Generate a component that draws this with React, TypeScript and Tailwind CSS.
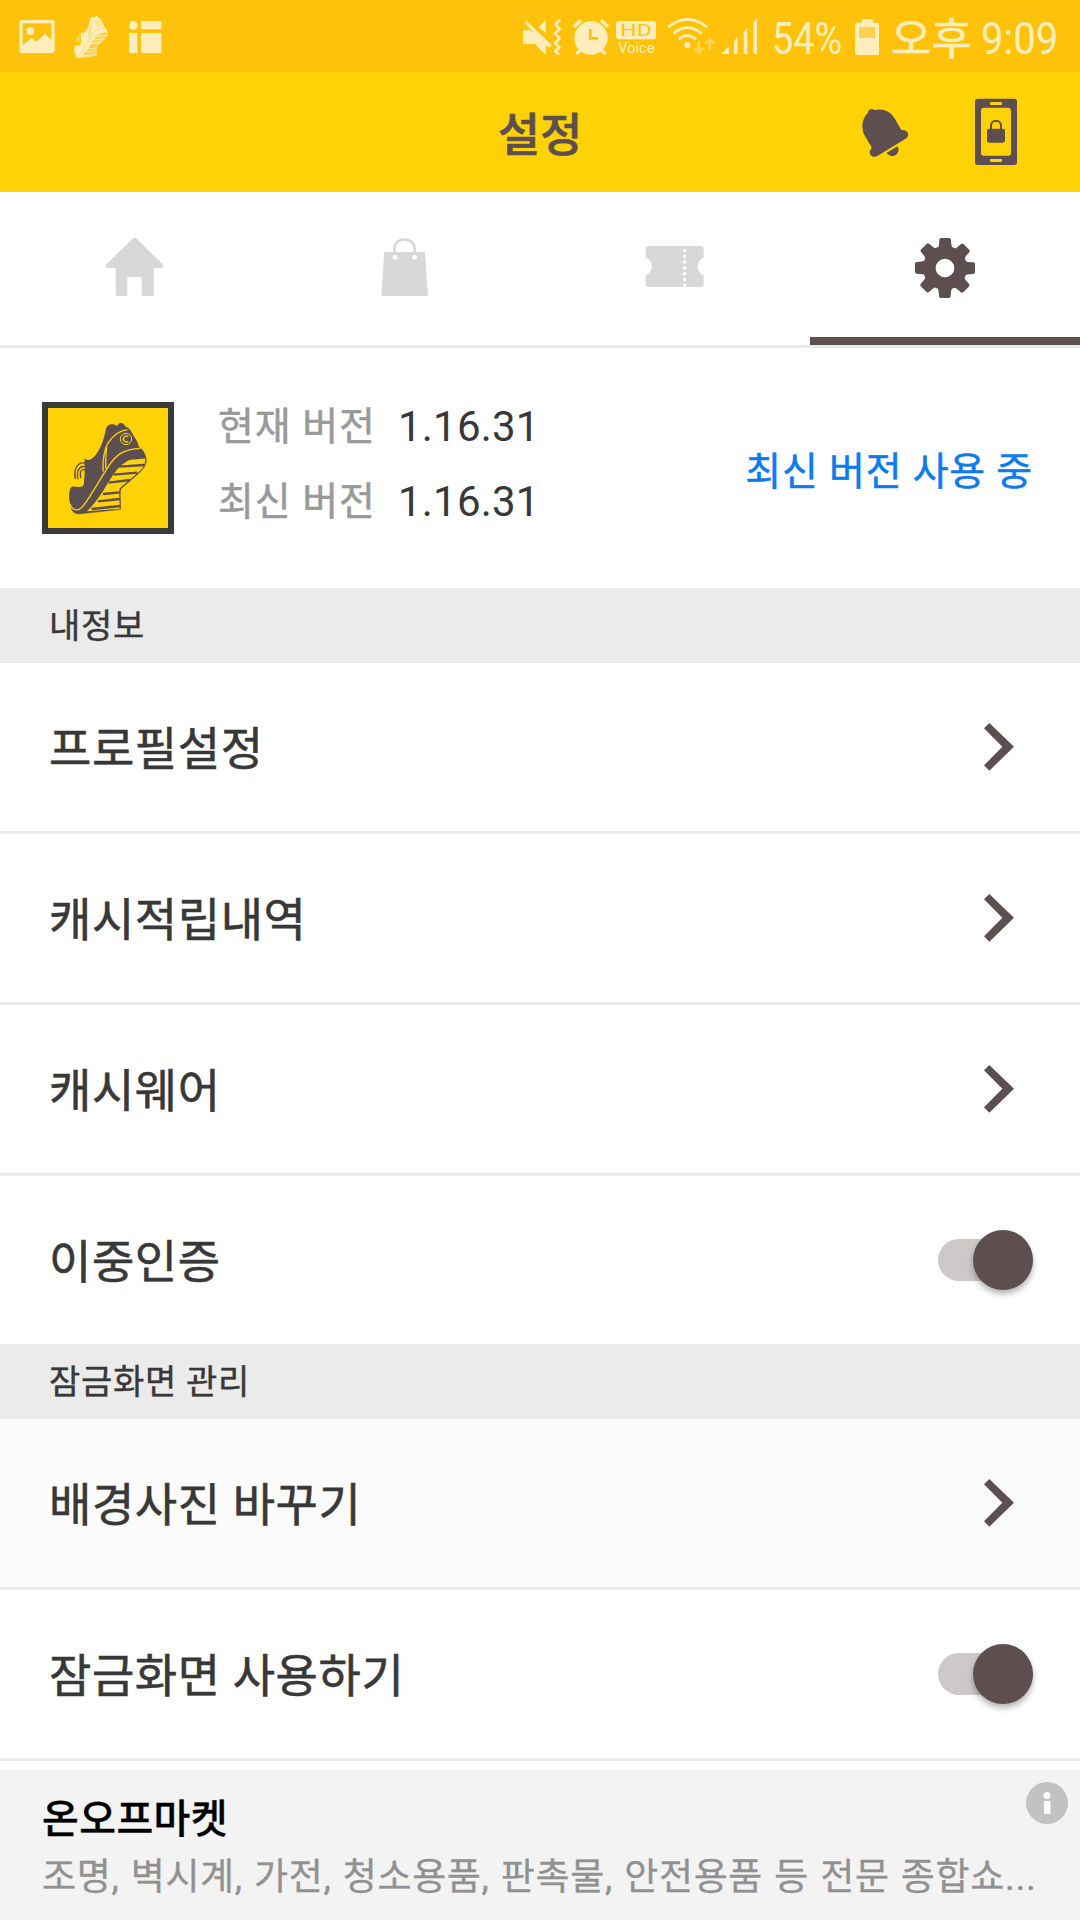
import type { ReactNode } from "react";

const FONT = "font-['Roboto','Noto_Sans_CJK_KR',sans-serif]";

function ShoeShape({ color, gap }: { color: string; gap: string }) {
  return (
    <g>
      <path
        fill={color}
        d="M257 152C258 137 269 131 279 133C285 134 288 138 292 137C296 129 302 126 308 130C313 134 314 139 321 142C328 146 334 153 338 162C346 177 354 184 357 202C371 209 379 225 379 242C378 258 367 270 353 283L302 327C299 341 302 360 301 388L173 402C160 401 152 391 151 374C146 356 145 330 155 320C168 319 178 324 188 319C194 312 191 304 193 294C196 276 192 255 194 235C199 241 208 242 217 235C232 222 246 201 257 152Z"
      />
      <path fill={gap} d="M304 256C324 239 349 227 376 236C377 257 364 271 349 282L299 325C296 345 300 361 299 386L200 394C228 369 245 340 262 312C275 291 287 270 304 256Z" />
      <path
        stroke={color}
        strokeWidth="7"
        fill="none"
        d="M318 237L372 232M298 260L373 255M281 284L352 278M266 308L330 300M249 342L299 337M234 364L300 357M215 387L301 378"
      />
      <path fill="none" stroke={color} strokeWidth="2" d="M378 235C382 255 365 272 350 285L302 327C298 345 303 365 301 388L173 402" />
      <path
        fill="none"
        stroke={gap}
        strokeWidth="4"
        d="M150 372C158 395 177 394 190 377C218 340 238 300 267 257C287 226 310 207 361 205M250 275C247 245 252 209 265 188C279 166 298 153 322 149M258 266C256 247 257 226 260 201"
      />
      <circle cx="318" cy="177" r="17" fill="none" stroke={gap} strokeWidth="3" />
      <path d="M325 170A9 9 0 1 0 325 184" fill="none" stroke={gap} strokeWidth="4" />
      <path fill="none" stroke={color} strokeWidth="4" d="M166 297C160 267 173 245 194 249M174 298C168 274 178 257 194 260M182 294C178 276 184 266 195 270" />
    </g>
  );
}

function StatusIcon({ x, w, className, children }: { x: number; w: number; className?: string; children: ReactNode }) {
  return (
    <svg viewBox={`${x} 0 ${w} 216`} width={w / 3} height="72" fill="#ffeebb" className={`shrink-0 overflow-visible ${className ?? ""}`}>
      {children}
    </svg>
  );
}

function StatusBar() {
  return (
    <div className="flex h-[72px] items-center bg-[#ffc20a] pl-[19px] pr-[24px] text-[45px] leading-[72px] text-[#ffeebb]">
      <StatusIcon x={57} w={108}>
        <path fillRule="evenodd" d="M65 60H157Q164 60 164 67V152Q164 159 157 159H65Q58 159 58 152V67Q58 60 65 60ZM68 70V136L95 113L109 125L135 101L154 119V70Z" />
        <circle cx="91" cy="93" r="12" />
      </StatusIcon>
      <StatusIcon x={222} w={102} className="ml-[19px]">
        <g transform="translate(159.600 -11) scale(.43 .46)">
          <ShoeShape color="#ffeebb" gap="#ffce52" />
        </g>
      </StatusIcon>
      <StatusIcon x={387} w={97} className="ml-[21px]">
        <circle cx="400" cy="76" r="13" />
        <path d="M423 63H484V88H423ZM387 99H412V159H387ZM423 99H484V159H423Z" />
      </StatusIcon>

      <div className="flex-1"></div>

      <StatusIcon x={69} w={114}>
        <path d="M69 91H91L154 132L143 142L137 136V163H134L105 132H74Q69 132 69 126ZM137 59V98L115 82Z" />
        <path d="M77 66L152 139" stroke="#ffeebb" strokeWidth="9" />
        <path d="M181 60L166 73L179 87L165 101L179 115L165 129L179 143L166 153L177 164" fill="none" stroke="#ffeebb" strokeWidth="8" strokeLinejoin="round" />
      </StatusIcon>
      <StatusIcon x={219} w={108} className="ml-[12px]">
        <circle cx="273" cy="114" r="50" />
        <path d="M222 80L243 61M324 80L303 61M243 149L229 162M303 149L317 162" stroke="#ffeebb" strokeWidth="10" />
        <path d="M271 87V115H294" fill="none" stroke="#ffc20a" strokeWidth="8" />
      </StatusIcon>
      <StatusIcon x={348} w={120} className="ml-[7px]">
        <rect x="348" y="63" width="120" height="55" rx="9" />
        <text x="361" y="107" fontSize="47" textLength="94" lengthAdjust="spacingAndGlyphs" fill="#ffc20a">
          HD
        </text>
        <text x="355" y="158" fontSize="45" textLength="108" lengthAdjust="spacingAndGlyphs">
          Voice
        </text>
      </StatusIcon>
      <StatusIcon x={501} w={144} className="ml-[11px]">
        <g fill="none" stroke="#ffeebb" strokeWidth="8">
          <path d="M504 82Q562 34 621 82M520 101Q562 65 605 101M536 118Q562 96 588 118" />
        </g>
        <circle cx="562" cy="135" r="9" />
        <path d="M596 123V157M583 144L596 158L609 144M629 150V117M616 130L629 117L642 130" fill="none" stroke="#ffd553" strokeWidth="8" />
      </StatusIcon>
      <StatusIcon x={663} w={108} className="ml-[6px]">
        <path d="M663 162L687 139V162ZM702 162V122L713 111V162ZM731 162V95L742 84V162ZM760 162V67L771 54V162Z" />
      </StatusIcon>
      <div className="ml-[15px] w-[72px] pt-[5px]">
        <div className="w-max origin-left scale-x-[.84]">54%</div>
      </div>
      <StatusIcon x={225} w={72} className="ml-[11px]">
        <path d="M245 57H278V68H292Q297 68 297 73V160Q297 165 292 165H230Q225 165 225 160V73Q225 68 230 68H245Z" />
        <path d="M237 81H286V114H237Z" fill="#ffd34f" />
      </StatusIcon>
      <div className="ml-[12px] w-[90px] pt-[7px] text-[44px] [-webkit-text-stroke:0.6px]">오후</div>
      <div className="w-[75px] pt-[5px]">
        <div className="w-max origin-left scale-x-[.89]">9:09</div>
      </div>
    </div>
  );
}

function Header() {
  return (
    <div className="grid h-[120px] grid-cols-[1fr_auto_1fr] items-center bg-[#ffd205] text-[#5d4f4f]">
      <div></div>
      <div className="pt-[6px] text-[46px] font-medium leading-[114px] [-webkit-text-stroke:0.7px]">설정</div>
      <div className="flex justify-end gap-[60px] pr-[63px]">
        <svg viewBox="225 216 180 360" width="60" height="120" fill="#5d4f4f">
          <path d="M264 338C265 326 277 324 283 330C309 324 333 334 345 357L361 385C364 392 368 390 374 391C386 395 388 408 379 415L292 468C281 475 268 466 269 455C270 448 277 446 274 440L251 401C243 375 248 354 264 338Z" />
          <path d="M320 458L353 439C360 453 352 466 340 468C332 469 325 465 320 458Z" />
        </svg>
        <svg viewBox="585 216 126 360" width="42" height="120" fill="#5d4f4f">
          <path
            fillRule="evenodd"
            d="M593 296H703Q711 296 711 304V487Q711 495 703 495H593Q585 495 585 487V304Q585 296 593 296ZM611 323Q603 323 603 331V459Q603 467 611 467H685Q693 467 693 459V331Q693 323 685 323ZM632 306Q630 306 630 308V313Q630 315 632 315H664Q666 315 666 313V308Q666 306 664 306ZM632 477Q630 477 630 479V484Q630 486 632 486H664Q666 486 666 484V479Q666 477 664 477Z"
          />
          <rect x="621" y="386" width="54" height="42" rx="7" />
          <path d="M633 390V377C633 357 663 357 663 377V390" fill="none" stroke="#5d4f4f" strokeWidth="6" />
        </svg>
      </div>
    </div>
  );
}

const TEETH = [0, 45, 90, 135, 180, 225, 270, 315];

function Tabs() {
  return (
    <div className="grid h-[156px] grid-cols-4 border-b-[3px] border-[#ebe9e9]">
      <div className="flex justify-center pt-[45px]">
        <svg viewBox="135 141 180 180" width="60" height="60" fill="#d8d8d8">
          <path d="M219 145Q224 141 229 145L308 223Q313 233 305 234H281V314Q281 318 277 318H249Q245 318 245 314V265Q245 261 241 261H206Q202 261 202 265V314Q202 318 198 318H171Q167 318 167 314V234H143Q135 233 139 223Z" />
        </svg>
      </div>
      <div className="flex justify-center pt-[45px]">
        <svg viewBox="945 141 180 180" width="60" height="60" fill="#d8d8d8">
          <path d="M973 186H1095L1104 318H964Z" />
          <path d="M1003 202V178C1003 138 1064 138 1064 178V202" fill="none" stroke="#d8d8d8" strokeWidth="8" />
          <circle cx="1005" cy="202" r="7" fill="#fff" />
          <circle cx="1064" cy="202" r="7" fill="#fff" />
        </svg>
      </div>
      <div className="flex justify-center pt-[45px]">
        <svg viewBox="135 141 180 180" width="60" height="60" fill="#d8d8d8">
          <path d="M146 168H302Q311 168 311 177V202C287 214 287 246 311 256V282Q311 291 302 291H146Q137 291 137 282V256C161 246 161 214 137 202V177Q137 168 146 168Z" />
          <path d="M253.500 177V291" stroke="#fff" strokeWidth="9" strokeDasharray="9 8.400" />
        </svg>
      </div>
      <div className="flex flex-col items-center justify-between pt-[45px]">
        <svg viewBox="945 141 180 180" width="60" height="60" className="overflow-visible" fill="#5d4f4f">
          {TEETH.map((angle) => (
            <path key={angle} transform={`rotate(${angle} 1035 234)`} d="M1013 175Q1017 172 1018 149Q1019 144 1023 144H1048Q1052 144 1053 149Q1054 172 1058 175V190H1013Z" />
          ))}
          <circle cx="1035" cy="234" r="47" fill="none" stroke="#5d4f4f" strokeWidth="38" />
        </svg>
        <div className="h-[8px] w-full bg-[#5d4f4f]"></div>
      </div>
    </div>
  );
}

function VersionInfo() {
  return (
    <div className="flex h-[240px] items-center pl-[42px] pr-[47px]">
      <div className="h-[132px] w-[132px] border-[6px] border-[#393b39] bg-[#ffd205]">
        <svg viewBox="84 84 360 360" width="120" height="120">
          <ShoeShape color="#5d4f4f" gap="#ffd205" />
        </svg>
      </div>
      <div className="mb-[9px] ml-[44px] grid grid-cols-[180px_auto] text-[39px] leading-[75px] tracking-[0.9px] text-[#999]">
        <div className="pt-[2px] leading-[73px] [-webkit-text-stroke:0.5px]">현재 버전</div>
        <div className="text-[42px] tracking-[0.2px] text-[#383838]">1.16.31</div>
        <div className="pt-[2px] leading-[73px] [-webkit-text-stroke:0.5px]">최신 버전</div>
        <div className="text-[42px] tracking-[0.2px] text-[#383838]">1.16.31</div>
      </div>
      <div className="flex-1"></div>
      <div className="pt-[8px] text-[39px] tracking-[0.75px] text-[#0b7bef] [-webkit-text-stroke:0.5px]">최신 버전 사용 중</div>
    </div>
  );
}

function SectionTitle({ children }: { children: ReactNode }) {
  return (
    <div className="h-[75px] bg-[#ebebeb] pl-[49px] pt-px text-[34px] leading-[74px] tracking-[0.7px] text-[#383838] [-webkit-text-stroke:0.4px]">
      {children}
    </div>
  );
}

function Arrow() {
  return (
    <svg viewBox="852 897 90 144" width="30" height="48" className="mr-[19px]" fill="#5d4f4f">
      <path d="M868 897L942 968L868 1040L852 1024L907 968L852 913Z" />
    </svg>
  );
}

function Toggle() {
  return (
    <div className="flex h-[42px] w-[95px] items-center justify-end rounded-full bg-[#cdc9c8]">
      <div className="h-[60px] w-[60px] shrink-0 rounded-full bg-[#5d4f4f] shadow-[0_4px_6px_rgba(0,0,0,0.3)]"></div>
    </div>
  );
}

function Row({ label, toggle, last, className }: { label: string; toggle?: boolean; last?: boolean; className?: string }) {
  return (
    <div className={`border-[#ebebeb] ${last ? "" : "border-b-[3px]"} ${className ?? ""}`}>
      <div className="flex h-[168px] items-center justify-between pl-[49px] pr-[47px]">
        <div className="pt-[5px] text-[46px] tracking-[0.6px] text-[#383838] [-webkit-text-stroke:0.6px]">{label}</div>
        {toggle ? <Toggle /> : <Arrow />}
      </div>
    </div>
  );
}

function AdBanner() {
  return (
    <div className="flex h-[150px] bg-[#f3f3f3] pl-[42px] pt-[12px]">
      <div className="w-[984px] pt-[2px]">
        <div className="h-[66px] text-[40px] font-medium leading-[72px] tracking-[0.4px] text-black [-webkit-text-stroke:0.3px]">온오프마켓</div>
        <div className="whitespace-nowrap text-[37px] leading-[56px] tracking-[0.7px] text-[#919191] [-webkit-text-stroke:0.3px] [word-spacing:1.3px]">
          조명, 벽시계, 가전, 청소용품, 판촉물, 안전용품 등 전문 종합쇼...
        </div>
      </div>
      <svg viewBox="0 0 42 42" width="42" height="42" className="shrink-0">
        <circle cx="21" cy="21" r="21" fill="#c2c2c2" />
        <circle cx="21" cy="13.500" r="3.500" fill="#fff" />
        <rect x="18" y="19" width="6.500" height="13" rx="1" fill="#fff" />
      </svg>
    </div>
  );
}

function App() {
  return (
    <div className={`h-[1920px] w-[1080px] overflow-hidden bg-white ${FONT}`}>
      <StatusBar />
      <Header />
      <Tabs />
      <VersionInfo />
      <SectionTitle>내정보</SectionTitle>
      <Row label="프로필설정" />
      <Row label="캐시적립내역" />
      <Row label="캐시웨어" />
      <Row label="이중인증" toggle last />
      <SectionTitle>잠금화면 관리</SectionTitle>
      <Row label="배경사진 바꾸기" className="bg-[#fbfbfb]" />
      <Row label="잠금화면 사용하기" toggle className="mb-[9px]" />
      <AdBanner />
    </div>
  );
}

export default App;
